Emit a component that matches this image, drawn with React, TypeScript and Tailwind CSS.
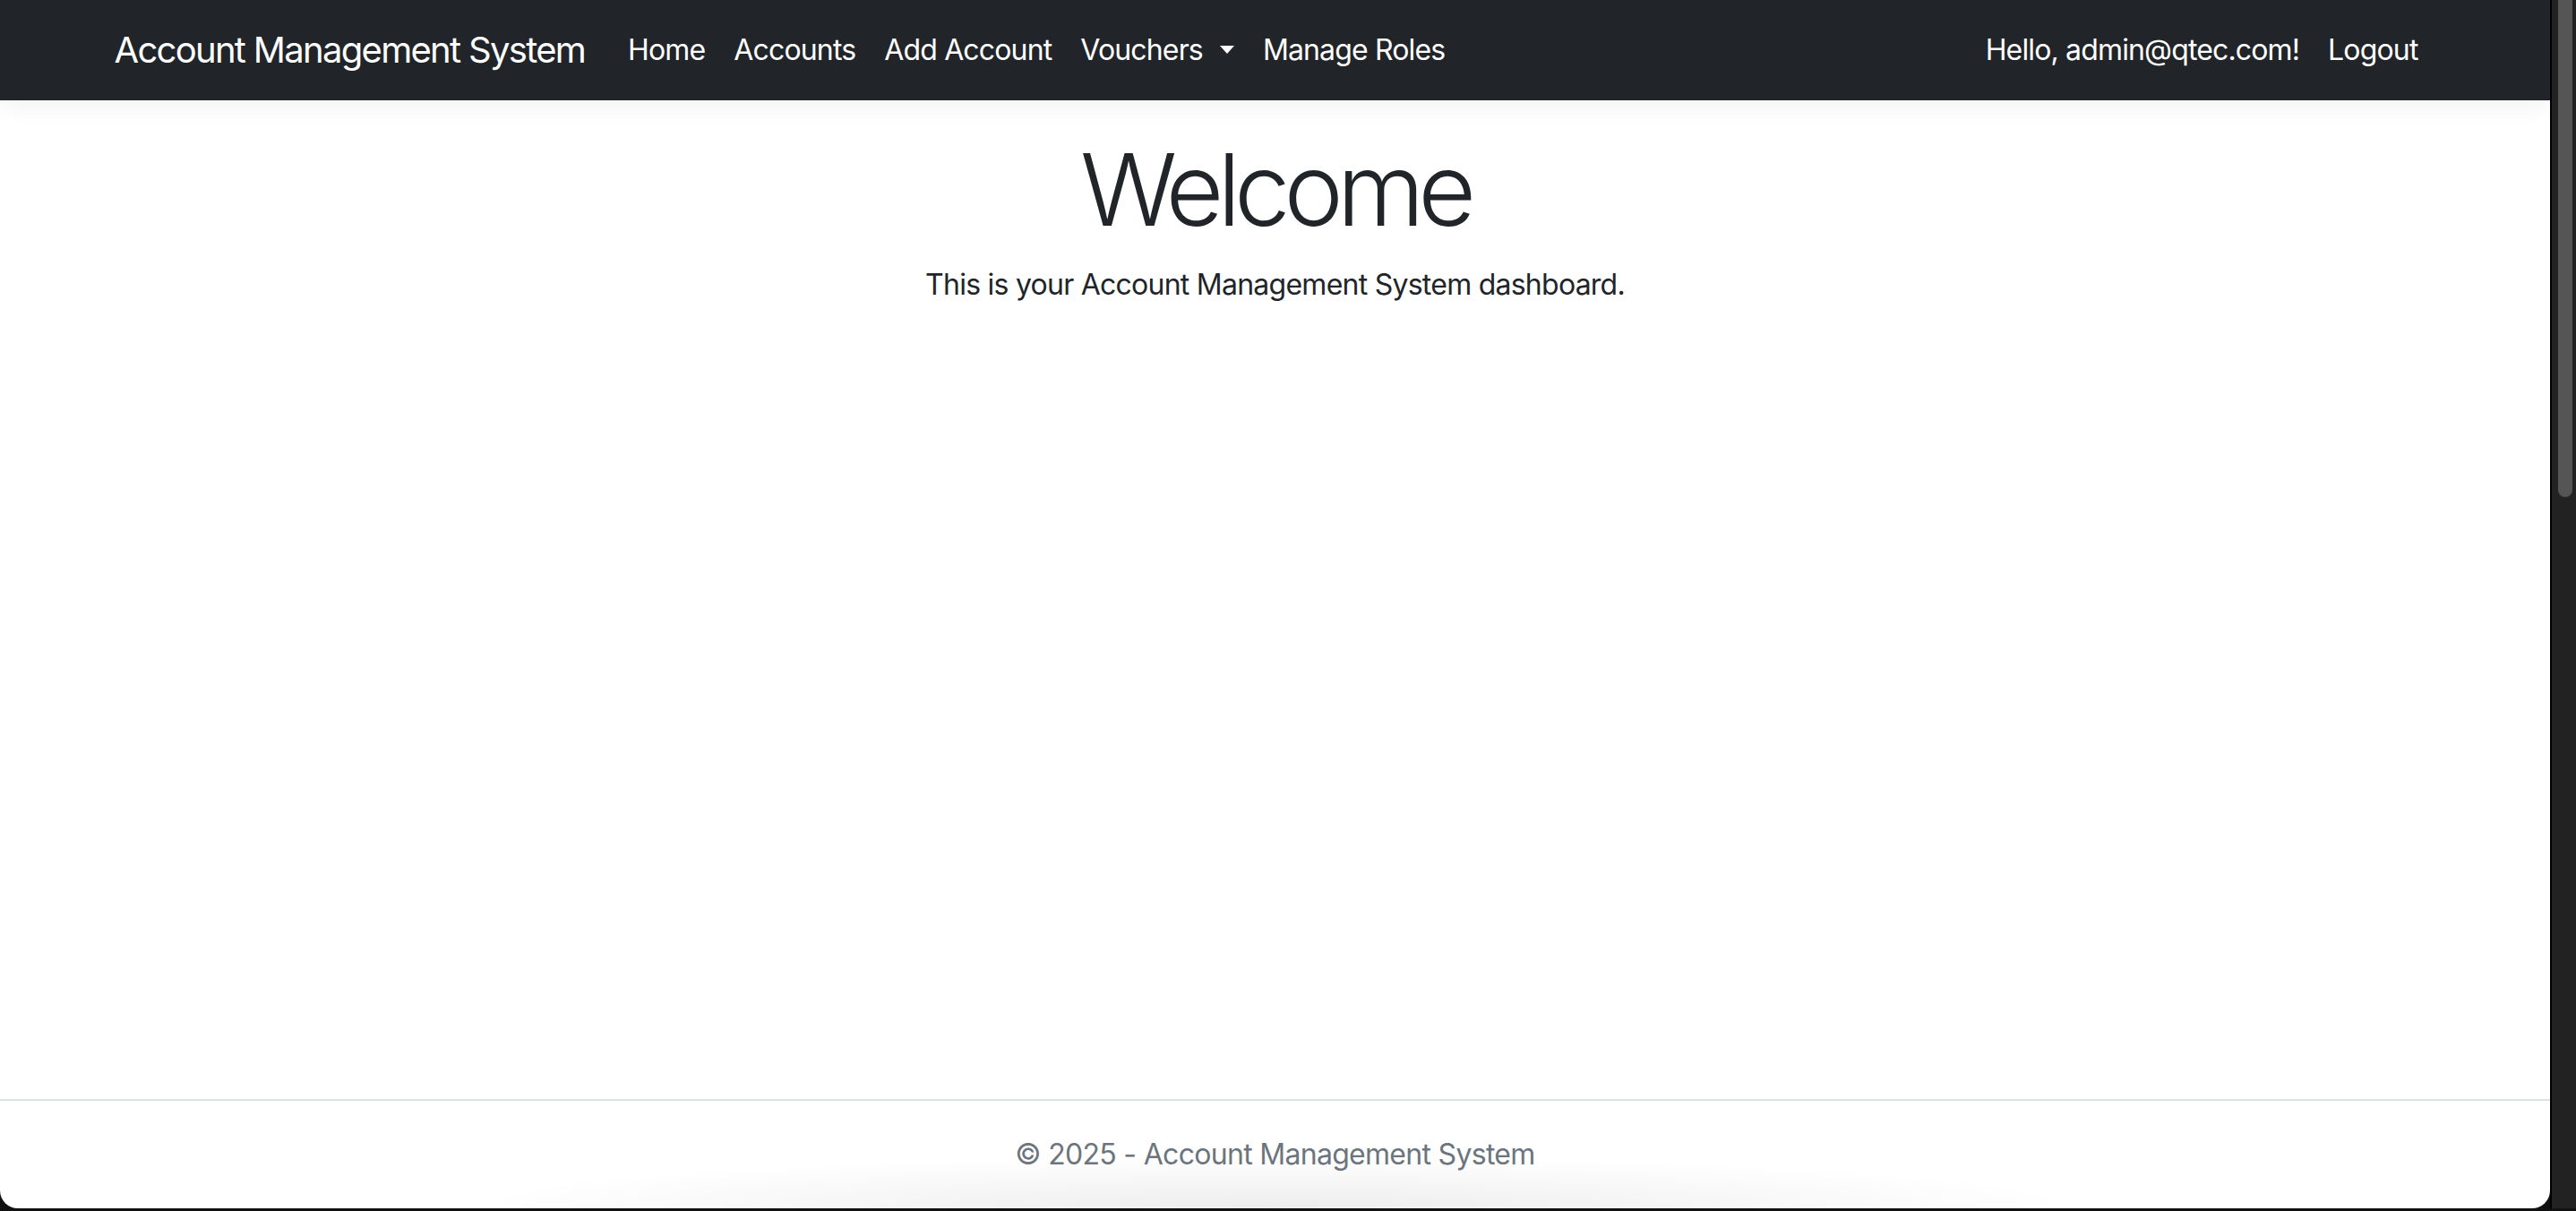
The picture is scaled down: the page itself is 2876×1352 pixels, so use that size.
import React from "react";

const links = ["Home", "Accounts", "Add Account"];

function NavLink({ children }: { children: React.ReactNode }) {
  return (
    <a className="px-[16px] py-[16px] text-white text-[32px] leading-[48px] tracking-[-0.85px] cursor-pointer">
      {children}
    </a>
  );
}

export default function App() {
  return (
    <div className="w-[2876px] h-[1352px] bg-[#111] flex font-['Inter',sans-serif] overflow-hidden">
      <div className="w-[2847px] h-[1349px] bg-white rounded-b-[20px] flex flex-col relative overflow-hidden">
        <nav className="h-[112px] bg-[#212529] shadow-[0_8px_24px_rgba(0,0,0,0.05)] shrink-0">
          <div className="mx-auto w-[2640px] px-[24px] h-full flex items-center">
            <a className="text-white text-[40px] leading-[60px] mr-[32px] tracking-[-1.7px]">
              Account Management System
            </a>
            <div className="flex items-center flex-1">
              {links.map((l) => (
                <NavLink key={l}>{l}</NavLink>
              ))}
              <a className="px-[16px] py-[16px] text-white text-[32px] leading-[48px] tracking-[-0.85px] flex items-center">
                Vouchers
                <span className="ml-[19px] mb-[1px] w-0 h-0 border-x-[8.5px] border-x-transparent border-t-[9px] border-t-white" />
              </a>
              <NavLink>Manage Roles</NavLink>
            </div>
            <div className="flex items-center">
              <NavLink>Hello, admin@qtec.com!</NavLink>
              <button className="pl-[16px] pr-[20px] py-[16px] text-white text-[32px] leading-[48px] tracking-[-0.85px]">
                Logout
              </button>
            </div>
          </div>
        </nav>

        <main className="flex-1 pt-[32px] text-center text-[#212529]">
          <h1 className="text-[112px] leading-[134px] font-light mb-[16px] tracking-[-7.2px]">
            Welcome
          </h1>
          <p className="text-[32px] leading-[48px] tracking-[-0.75px]">
            This is your Account Management System dashboard.
          </p>
        </main>

        <footer className="border-t-[2px] border-[#dee2e6] h-[122px] shrink-0 relative">
          <div className="absolute inset-x-[500px] bottom-0 h-[60px] bg-[radial-gradient(ellipse_at_bottom,rgba(0,0,0,0.07),transparent_70%)]" />
          <div className="relative text-center text-[#6c757d] text-[32px] leading-[120px] tracking-[-0.7px]">
            © 2025 - Account Management System
          </div>
        </footer>
      </div>

      <div className="flex-1 h-[1349px] bg-[#222] border-l-[2px] border-black relative">
        <div className="absolute left-[7px] top-0 w-[16px] h-[555px] rounded-b-full bg-[#555]" />
      </div>
    </div>
  );
}
